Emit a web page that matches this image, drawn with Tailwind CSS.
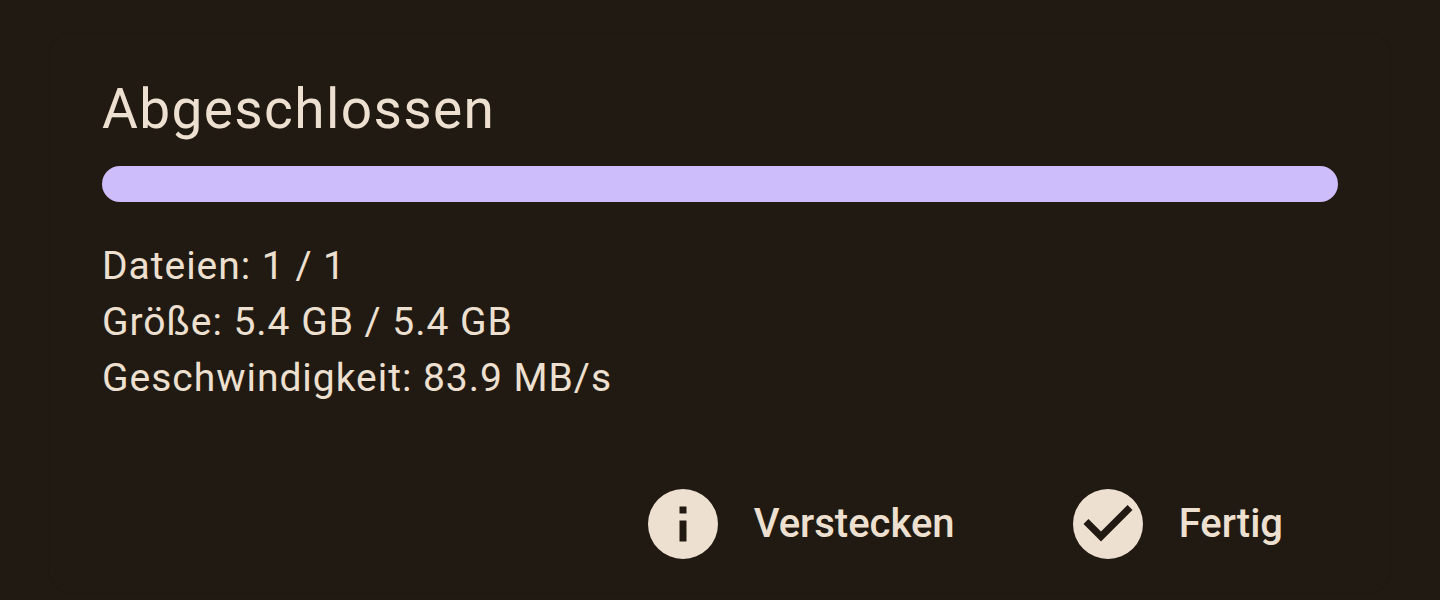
<!DOCTYPE html>
<html lang="de">
<head>
<meta charset="utf-8">
<meta name="viewport" content="width=device-width, initial-scale=1">
<title>Abgeschlossen</title>
<script src="https://cdn.jsdelivr.net/npm/@tailwindcss/browser@4"></script>
</head>
<body class="min-h-screen bg-[#211a12] px-12 pt-8 font-['Roboto',sans-serif] text-[#eee0d0]">
<main class="rounded-3xl border-2 border-[#201911] bg-[#211a12] px-[52px] pt-10 pb-8">
  <h1 class="text-[55px] leading-[70px] tracking-wide">Abgeschlossen</h1>
  <div role="progressbar" aria-label="Fortschritt" aria-valuenow="100" aria-valuemin="0" aria-valuemax="100" class="mt-[22px] h-9 w-full rounded-full bg-[#cdbdfa]"></div>
  <div class="mt-9 text-[39px] leading-14 tracking-wide">
    <p>Dateien: 1 / 1</p>
    <p>Größe: 5.4 GB / 5.4 GB</p>
    <p>Geschwindigkeit: 83.9 MB/s</p>
  </div>
  <div class="mt-[82px] flex justify-end gap-[118px] pr-[55px] text-[40px] leading-[72px] font-medium">
    <button type="button" class="flex items-center gap-9">
      <svg class="-m-[7px] size-[84px]" viewBox="0 0 24 24" fill="currentColor" aria-hidden="true"><path d="M12 2a10 10 0 1 0 0 20 10 10 0 0 0 0-20m1 15h-2v-6h2zm0-8h-2V7h2z"/></svg>
      Verstecken
    </button>
    <button type="button" class="flex items-center gap-9">
      <svg class="-m-[7px] size-[84px]" viewBox="0 0 24 24" fill="currentColor" aria-hidden="true"><path d="M12 2a10 10 0 1 0 0 20 10 10 0 0 0 0-20m-2 15-5-5 1.410-1.410L10 14.170l7.590-7.590L19 8z"/></svg>
      Fertig
    </button>
  </div>
</main>
</body>
</html>
